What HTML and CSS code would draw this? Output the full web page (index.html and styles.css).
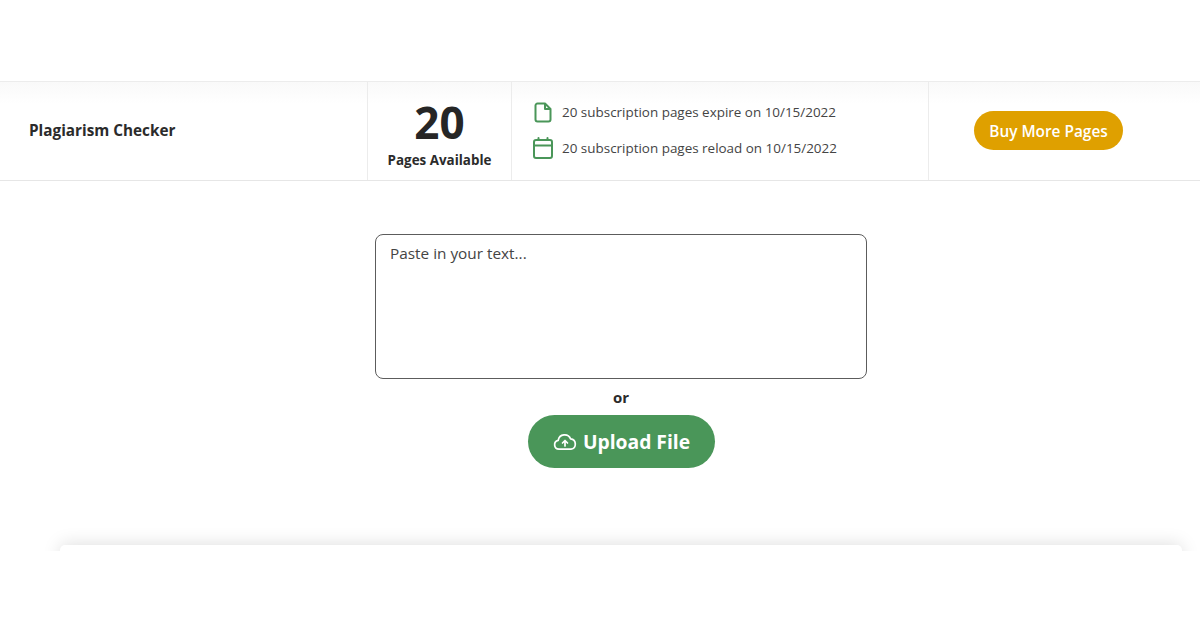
FILE: index.html
```html
<!DOCTYPE html>
<html lang="en">
<head>
<meta charset="utf-8">
<title>Plagiarism Checker</title>
<link rel="stylesheet" href="styles.css">
</head>
<body>
<header class="top"></header>
<section class="bar">
  <div class="cell cell-title"><h1 class="title">Plagiarism Checker</h1></div>
  <div class="cell cell-pages">
    <div class="count">20</div>
    <div class="count-label">Pages Available</div>
  </div>
  <div class="cell cell-info">
    <div class="info-row">
      <svg class="icon-file" width="18" height="21" viewBox="0 0 18 21" fill="none" stroke="#4a9659" stroke-width="2" stroke-linejoin="round"><path d="M3.500 1.500H11L16.500 7V17.500a2 2 0 0 1-2 2h-11a2 2 0 0 1-2-2v-14a2 2 0 0 1 2-2Z"/><path d="M11 1.500V7H16.500"/></svg>
      <span>20 subscription pages expire on 10/15/2022</span>
    </div>
    <div class="info-row">
      <svg class="icon-cal" width="20" height="22" viewBox="0 0 20 22" fill="none" stroke="#4a9659" stroke-width="2" stroke-linecap="round" stroke-linejoin="round"><rect x="1" y="3" width="18" height="18" rx="2"/><path d="M1 8.500H19M5.500 1V3M14.500 1V3"/></svg>
      <span>20 subscription pages reload on 10/15/2022</span>
    </div>
  </div>
  <div class="cell cell-buy"><a class="buy" href="#">Buy More Pages</a></div>
</section>
<main class="checker">
  <textarea class="paste" placeholder="Paste in your text..."></textarea>
  <div class="or">or</div>
  <a class="upload" href="#">
    <svg width="24" height="18" viewBox="0 0 24 18" fill="none" stroke="#fff" stroke-width="1.7" stroke-linecap="round" stroke-linejoin="round"><path d="M6 16.200a4.500 4.500 0 0 1-.8-8.900A6.500 6.500 0 0 1 17.600 5.900 5.200 5.200 0 0 1 18 16.200Z"/><path d="M12 13V7.500M9.500 10 12 7.500 14.500 10"/></svg>
    <span>Upload File</span>
  </a>
</main>
<section class="results"><div class="results-card"></div></section>
</body>
</html>
```
FILE: styles.css
```css
* { box-sizing: border-box; }
html, body { margin: 0; padding: 0; background: #fff; }
body { font-family: "Open Sans", "Liberation Sans", sans-serif; color: #2b2b2b; height: 630px; overflow: hidden; }

.top { height: 81px; }

.bar {
  display: grid;
  grid-template-columns: 368px 144px 417px 1fr;
  height: 100px;
  border-top: 1px solid #ececec;
  border-bottom: 1px solid #e6e6e6;
  background: linear-gradient(#f9f9f9 0, #fff 22px);
}
.cell { display: flex; align-items: center; border-right: 1px solid #ececec; }
.cell:last-child { border-right: 0; }
.cell-title { padding: 0 0 2px 29px; }
.title { margin: 0; font-size: 15.3px; line-height: 20px; font-weight: 700; color: #2b2b2b; }
.cell-pages { flex-direction: column; justify-content: flex-start; }
.count { margin-top: 12px; font-size: 44px; line-height: 56px; font-weight: 700; color: #262626; }
.count-label { font-size: 13.4px; line-height: 18px; font-weight: 700; margin-top: 1px; }
.cell-info { flex-direction: column; align-items: flex-start; justify-content: flex-start; gap: 14px; padding: 19px 0 0 21px; }
.info-row { display: flex; align-items: center; height: 22px; font-size: 13.45px; color: #444; }
.info-row span { margin-left: 9px; }
.icon-file { margin-left: 1px; margin-right: 1px; }
.cell-buy { justify-content: flex-start; padding: 0 0 1px 45px; }
.buy {
  display: flex; align-items: center; justify-content: center;
  width: 149px; height: 39px; padding-top: 1px;
  border-radius: 20px; background: #dfa000; color: #fff;
  font-size: 15.4px; font-weight: 600; text-decoration: none;
}

.checker { display: flex; flex-direction: column; align-items: center; width: 492px; height: 293px; margin: 53px 0 0 375px; }
.paste {
  display: block; flex: none; width: 492px; height: 145px; padding: 8px 14px;
  border: 1px solid #5c5c5c; border-radius: 8px; resize: none; outline: 0;
  font: 400 15.35px/20px "Open Sans", "Liberation Sans", sans-serif; color: #444;
}
.paste::placeholder { color: #444; opacity: 1; }
.or { margin-top: 8px; font-size: 15px; line-height: 20px; font-weight: 700; color: #2b2b2b; }
.upload {
  display: flex; align-items: center; justify-content: center; gap: 6px;
  width: 187px; height: 53px; margin-top: 8px; padding-left: 1px;
  border-radius: 27px; background: #4a9659; color: #fff;
  font-size: 19.3px; font-weight: 700; text-decoration: none;
}

.results { height: 24px; padding: 18px 0 0 60px; overflow: hidden; }
.results-card { width: 1122px; height: 80px; background: #fff; border-radius: 5px 5px 0 0; box-shadow: 0 -1px 18px rgba(0,0,0,.13); }
```
